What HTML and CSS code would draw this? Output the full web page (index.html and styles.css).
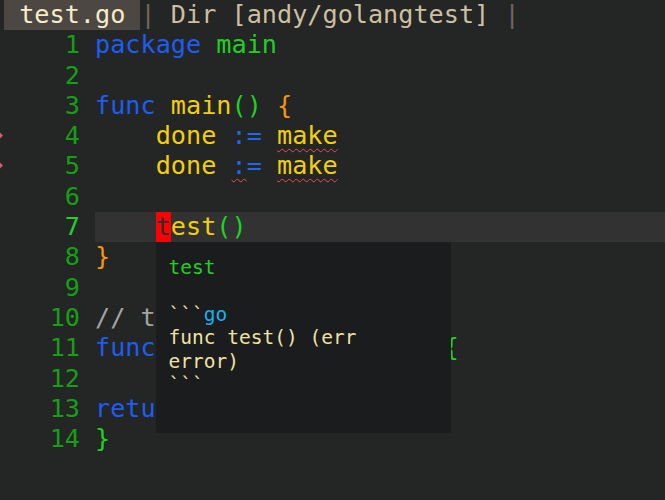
FILE: index.html
```html
<!DOCTYPE html>
<html lang="en">
<head>
    <meta charset="UTF-8">
    <meta name="viewport" content="width=device-width, initial-scale=1.0">
    <title>test.go</title>
    <link rel="stylesheet" href="styles.css">
</head>
<body>
    <div class="title-bar">
        <span class="tab"> test.go </span><span class="sep">|</span><span class="path"> Dir [andy/golangtest] </span><span class="sep">|</span>
    </div>

    <div class="editor">
        <div class="line"><span class="mark"></span><span class="num">1</span><span class="code"><span class="kw">package</span> <span class="pkg">main</span></span></div>
        <div class="line"><span class="mark"></span><span class="num">2</span><span class="code"></span></div>
        <div class="line"><span class="mark"></span><span class="num">3</span><span class="code"><span class="kw">func</span> <span class="id">main</span><span class="br-g">()</span> <span class="br-o">{</span></span></div>
        <div class="line"><span class="mark"><i class="diamond"></i></span><span class="num">4</span><span class="code">    <span class="id">done</span> <span class="op">:=</span> <span class="id err">make</span></span></div>
        <div class="line"><span class="mark"><i class="diamond"></i></span><span class="num">5</span><span class="code">    <span class="id">done</span> <span class="op"><span class="err">:</span>=</span> <span class="id err">make</span></span></div>
        <div class="line"><span class="mark"></span><span class="num">6</span><span class="code"></span></div>
        <div class="line current"><span class="mark"></span><span class="num">7</span><span class="code">    <span class="cursor">t</span><span class="id">est</span><span class="br-g">()</span><div class="hover"><div class="hover-title">test</div><div>&nbsp;</div><div>```<span class="lang">go</span></div><div>func test() (err</div><div>error)</div><div>```</div></div></span></div>
        <div class="line"><span class="mark"></span><span class="num">8</span><span class="code"><span class="br-o">}</span></span></div>
        <div class="line"><span class="mark"></span><span class="num">9</span><span class="code"></span></div>
        <div class="line"><span class="mark"></span><span class="num">10</span><span class="code"><span class="cm">// t</span></span></div>
        <div class="line"><span class="mark"></span><span class="num">11</span><span class="code"><span class="kw">func</span>                   <span class="br-g">{</span></span></div>
        <div class="line"><span class="mark"></span><span class="num">12</span><span class="code"></span></div>
        <div class="line"><span class="mark"></span><span class="num">13</span><span class="code"><span class="kw">retu</span></span></div>
        <div class="line"><span class="mark"></span><span class="num">14</span><span class="code"><span class="br-g">}</span></span></div>
    </div>
</body>
</html>
```

FILE: styles.css
```css
body {
    margin: 0;
    width: 665px;
    height: 500px;
    overflow: hidden;
    background-color: #242525;
    font-family: "DejaVu Sans Mono", monospace;
    font-size: 25.2px;
    line-height: 30.3px;
    color: #e8e0c8;
}
.title-bar {
    display: flex;
    height: 30.3px;
    padding-left: 4px;
    white-space: pre;
}
.tab {
    background-color: #4d4743;
    color: #f6ecc8;
}
.sep {
    color: #6f675f;
}
.path {
    color: #cdbf9f;
}

/* editor lines */
.line {
    display: flex;
    height: 30.3px;
    white-space: pre;
}
.mark {
    width: 4px;
    position: relative;
    overflow: hidden;
}
.diamond {
    position: absolute;
    left: -3px;
    top: 12px;
    width: 5px;
    height: 5px;
    background-color: #d65a68;
    transform: rotate(45deg);
}
.num {
    width: 76px;
    margin-right: 15px;
    text-align: right;
    color: #14a014;
}
.code {
    flex: 1;
    position: relative;
}
.current .num {
    color: #23d023;
}
.current .code {
    background-color: #323232;
}
.cursor {
    display: inline-block;
    background-color: #ff0000;
    color: #2e2e2e;
}

/* syntax colours */
.kw { color: #1c5df2; }
.pkg { color: #20d220; }
.id { color: #f2cf0a; }
.op { color: #2266ee; }
.br-g { color: #20d220; }
.br-o { color: #f5960c; }
.cm { color: #a3a3a3; }
.err {
    text-decoration: underline wavy #e85050;
    text-decoration-thickness: 1px;
    text-underline-offset: 4px;
}

/* hover popup */
.hover {
    position: absolute;
    left: 60.6px;
    top: 30.3px;
    width: 295px;
    height: 191px;
    box-sizing: border-box;
    padding: 14px 12px 0 13px;
    background-color: #1b1c1e;
    font-size: 19.5px;
    line-height: 23.3px;
    white-space: normal;
    color: #efe3a2;
    z-index: 10;
}
.hover-title {
    color: #20d220;
}
.lang {
    color: #17b0ee;
}
```
